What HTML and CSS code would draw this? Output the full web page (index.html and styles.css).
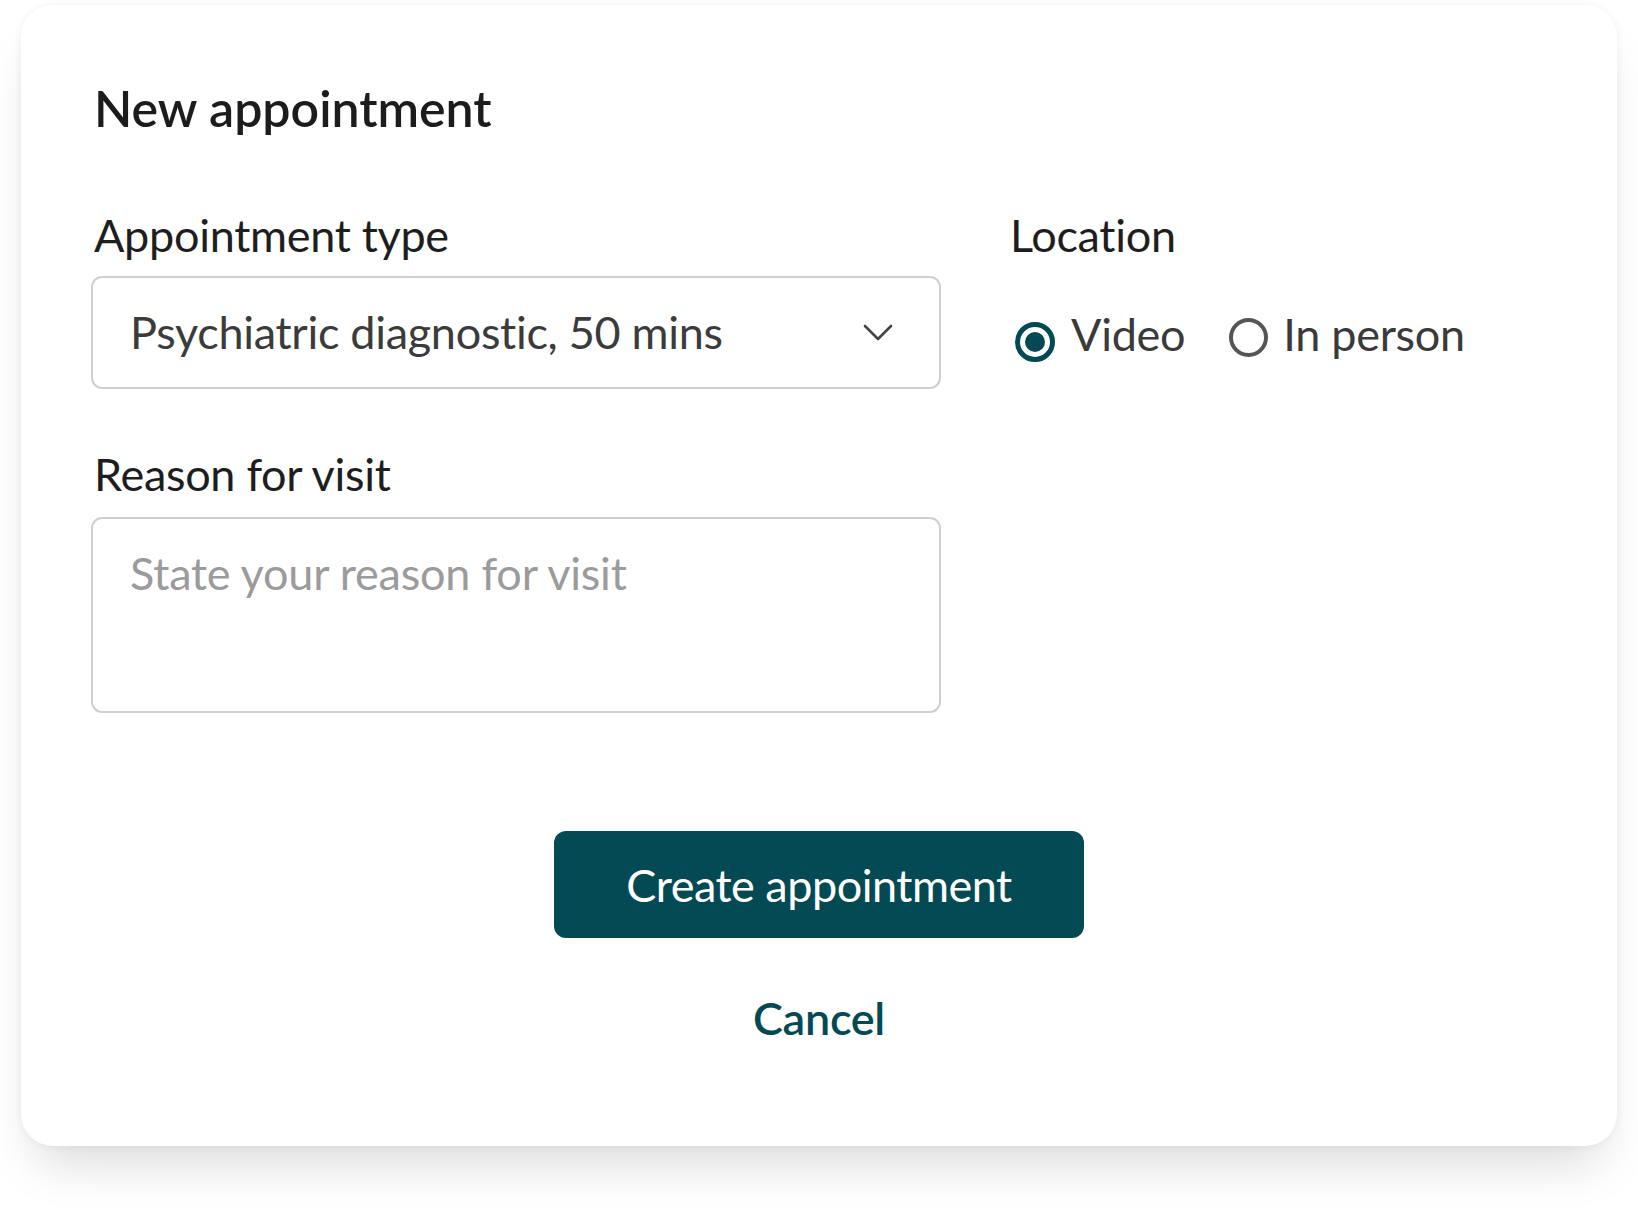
FILE: index.html
```html
<!DOCTYPE html>
<html lang="en">
<head>
<meta charset="utf-8">
<title>New appointment</title>
<link rel="stylesheet" href="styles.css">
</head>
<body>
<div class="card">
  <h1 class="title">New appointment</h1>
  <div class="form-grid">
    <div class="col-left">
      <div class="field">
        <div class="label">Appointment type</div>
        <div class="select">
          <span class="select-value">Psychiatric diagnostic, 50 mins</span>
          <svg class="chevron" width="30" height="18" viewBox="0 0 30 18"><polyline points="2,2 15,15 28,2" fill="none" stroke="#444" stroke-width="2.6" stroke-linecap="round" stroke-linejoin="round"/></svg>
        </div>
      </div>
      <div class="field field-reason">
        <div class="label">Reason for visit</div>
        <div class="textarea"><span class="placeholder">State your reason for visit</span></div>
      </div>
    </div>
    <div class="col-right">
      <div class="label">Location</div>
      <div class="radio-row">
        <div class="radio-item">
          <span class="radio radio-checked"><span class="radio-dot"></span></span>
          <span class="radio-text">Video</span>
        </div>
        <div class="radio-item radio-item-second">
          <span class="radio radio-empty"></span>
          <span class="radio-text">In person</span>
        </div>
      </div>
    </div>
  </div>
  <div class="actions">
    <div class="btn-primary">Create appointment</div>
    <div class="btn-link">Cancel</div>
  </div>
</div>
</body>
</html>
```
FILE: styles.css
```css
html, body {
  margin: 0;
  padding: 0;
  background: #ffffff;
}
body {
  box-sizing: border-box;
  min-height: 1221px;
  padding: 5px 21px 0 21px;
  font-family: "Lato", "Open Sans", sans-serif;
  font-variant-ligatures: none;
  color: #1c1c1c;
}
.card {
  box-sizing: border-box;
  width: 1596px;
  height: 1141px;
  background: #fff;
  border-radius: 32px;
  padding: 73px 70px 0 70px;
  box-shadow: 0 0 8px rgba(0,0,0,0.06), 0 32px 50px -16px rgba(0,0,0,0.15);
}
.title {
  margin: 0;
  font-size: 50px;
  font-weight: 600;
  line-height: 60px;
  padding-left: 3px;
  color: #1c1c1c;
}
.form-grid {
  display: grid;
  grid-template-columns: 850px 1fr;
  column-gap: 69px;
  margin-top: 70px;
}
.label {
  font-size: 45px;
  letter-spacing: -0.3px;
  line-height: 55px;
  padding-left: 3px;
  color: #1e1e1e;
}
.select {
  box-sizing: border-box;
  margin-top: 13px;
  height: 113px;
  border: 2px solid #cfcfcf;
  border-radius: 11px;
  display: flex;
  align-items: center;
  justify-content: space-between;
  padding: 0 46px 0 37px;
}
.select-value {
  font-size: 45px;
  letter-spacing: -0.3px;
  line-height: 55px;
  color: #3b3b3b;
}
.chevron {
  display: block;
}
.field-reason {
  margin-top: 58px;
}
.textarea {
  box-sizing: border-box;
  margin-top: 15px;
  height: 196px;
  border: 2px solid #cfcfcf;
  border-radius: 11px;
  padding: 27px 37px;
}
.placeholder {
  font-size: 45px;
  letter-spacing: -0.2px;
  line-height: 55px;
  color: #9b9b9b;
}
.col-right .label {
  padding-left: 0;
}
.radio-row {
  display: flex;
  align-items: flex-start;
  margin-top: 44px;
}
.radio-item {
  display: flex;
  align-items: flex-start;
}
.radio-item-second {
  margin-left: 44px;
}
.radio {
  box-sizing: border-box;
  display: flex;
  align-items: center;
  justify-content: center;
  border-radius: 50%;
  flex-shrink: 0;
}
.radio-checked {
  width: 40px;
  height: 40px;
  border: 5px solid #034a54;
  margin: 15px 16px 0 5px;
}
.radio-dot {
  width: 20px;
  height: 20px;
  border-radius: 50%;
  background: #034a54;
}
.radio-empty {
  width: 39px;
  height: 39px;
  border: 4px solid #555;
  margin: 11px 15px 0 0;
}
.radio-text {
  font-size: 45px;
  letter-spacing: -0.3px;
  line-height: 55px;
  color: #3a3a3a;
}
.actions {
  display: flex;
  flex-direction: column;
  align-items: center;
  margin-top: 118px;
}
.btn-primary {
  box-sizing: border-box;
  width: 530px;
  height: 107px;
  background: #034a54;
  border-radius: 12px;
  color: #fff;
  font-size: 45px;
  letter-spacing: -0.5px;
  line-height: 56px;
  display: flex;
  align-items: center;
  justify-content: center;
}
.btn-link {
  margin-top: 53px;
  font-size: 45px;
  letter-spacing: -0.3px;
  line-height: 55px;
  font-weight: 600;
  color: #034a54;
}
```
